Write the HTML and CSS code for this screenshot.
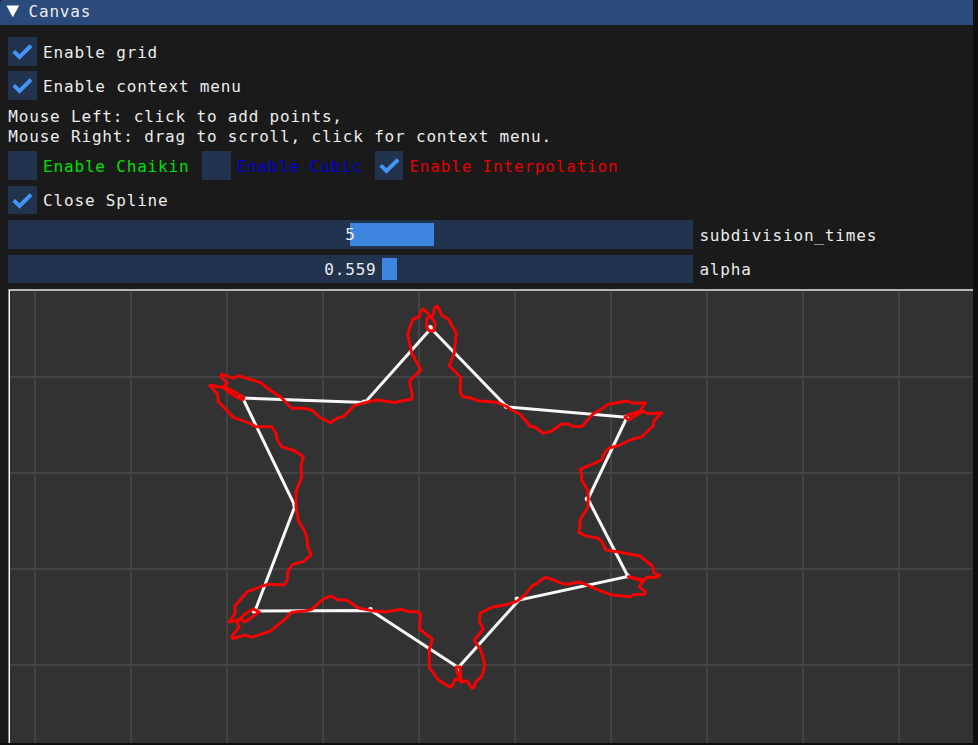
FILE: index.html
```html
<!DOCTYPE html>
<html lang="en">
<head>
<meta charset="utf-8">
<title>Canvas</title>
<link rel="stylesheet" href="styles.css">
</head>
<body>
<main class="window">
  <header class="titlebar">
    <svg class="arrow" width="14" height="13" viewBox="0 0 14 13"><path d="M0.4 0.6H13.2L6.8 12.2Z" fill="#fff"/></svg>
    <span class="title">Canvas</span>
  </header>
  <section class="content">
    <div class="row">
      <span class="box"><svg class="check" viewBox="0 0 29 29"><path d="M5.8 14.6L11.7 20.2L23.4 8.8"/></svg></span>
      <span class="label">Enable grid</span>
    </div>
    <div class="row">
      <span class="box"><svg class="check" viewBox="0 0 29 29"><path d="M5.8 14.6L11.7 20.2L23.4 8.8"/></svg></span>
      <span class="label">Enable context menu</span>
    </div>
    <p class="hint">Mouse Left: click to add points,<br>Mouse Right: drag to scroll, click for context menu.</p>
    <div class="row">
      <span class="box"></span>
      <span class="label green">Enable Chaikin</span>
      <span class="box next"></span>
      <span class="label blue">Enable Cubic</span>
      <span class="box next"><svg class="check" viewBox="0 0 29 29"><path d="M5.8 14.6L11.7 20.2L23.4 8.8"/></svg></span>
      <span class="label red">Enable Interpolation</span>
    </div>
    <div class="row">
      <span class="box"><svg class="check" viewBox="0 0 29 29"><path d="M5.8 14.6L11.7 20.2L23.4 8.8"/></svg></span>
      <span class="label">Close Spline</span>
    </div>
    <div class="row">
      <div class="slider"><i class="grab grab-times"></i><span class="value">5</span></div>
      <span class="label">subdivision_times</span>
    </div>
    <div class="row">
      <div class="slider"><i class="grab grab-alpha"></i><span class="value">0.559</span></div>
      <span class="label">alpha</span>
    </div>
    <svg class="canvas" width="965" height="454" viewBox="8 289 965 454">
      <rect x="8" y="289" width="965" height="454" fill="#323232"/>
      <path class="grid" d="M35 291V743M131 291V743M227 291V743M323 291V743M419 291V743M515 291V743M611 291V743M707 291V743M803 291V743M899 291V743M10 377H973M10 473H973M10 569H973M10 665H973"/>
      <rect x="8" y="289" width="965" height="2" fill="#b4b6b4"/>
      <rect x="8" y="289" width="1" height="454" fill="#858585"/>
      <rect x="9" y="290" width="1" height="453" fill="#fff"/>
      <path class="polygon" d="M431 328.5L507 407L627 417.2L588 499L628 576.5L519 600L458.3 667.5L371 610.5L255 611L295 506L242.7 398L365 402.5Z"/>
      <g class="points">
        <circle cx="430.3" cy="327.3" r="2.4"/><circle cx="506" cy="406.4" r="2.4"/><circle cx="626.6" cy="416.8" r="2.4"/><circle cx="587" cy="499" r="2.4"/><circle cx="627.6" cy="576" r="2.4"/><circle cx="517" cy="599" r="2.4"/><circle cx="458" cy="669" r="2.4"/><circle cx="370.5" cy="609.5" r="2.4"/><circle cx="254" cy="611.3" r="2.4"/><circle cx="294.5" cy="505" r="2.4"/><circle cx="240.7" cy="397" r="2.4"/><circle cx="364" cy="401.8" r="2.4"/>
      </g>
      <path class="curve" d="M242.7 400L236.7 397.3L226.7 390.7L222.7 387.3L227.3 383.3L220.7 376L222 374L233.3 378.3L238.3 375.7L246.7 378.3L260 382.3L270 390L281 397.3L291.7 408.3H305L312.7 410.7L320.7 418L330.7 422.7L337.3 418L343.3 416.7L354 405.7L365 402.7L376.7 400L396.7 402.7L397 401.7L411.7 399.3L412.3 395L409.7 384V380.7L421 370L411.7 353.3L407.7 334L412.7 319.3L419.3 316.7L421 311L423.3 308.7L428.3 314L430 316.5L426.7 319V326.7L429 330.7H434L435.3 323.3L431.5 317L433.5 314L434.5 308L436.7 306L439 309L441.7 315L448.3 319.3L456.3 333.3L454.3 353.3L449.3 366L460.7 377.3L460 391.7L462.7 396.7L470 397.7L477.3 400.7L496.7 402.3L505.7 406L511.7 410L520 414.3L530 426L535 427.3L543.3 433.3L551.7 431L561.7 424L568 424L573 426.5H582L592.7 414.3L600 410L608.3 404.3L627.3 401L633.3 403.3L645.7 402.7L641 409L641.7 410.7L628.3 415L625 417.3L628.3 420L636.7 415L643 411L648 413.7L661.7 412.7L654 420.7L653.3 426L641.7 436.7L630 440L620 445L608.3 448.3L604 454L601.7 460L595 463L580 469.3L581.7 475V480L588 490.7L588.3 499.3L587.7 507.3L580 520V526L578.7 532.3L585 535.7L598.3 538.3L602 542L606 550L616.7 551.7L640 556L652.3 566L654.3 573.3L660 575.3L656 577.5L646.7 577L643.3 581.7L628.3 576.7L643.3 580L639.3 586.7L645.7 592L644 594.5H634L630 596.7L611.7 595L596.7 589.3L580 582L565 584.5L546 577.3L541 580L538 583L531.7 586L525 595L516.7 601.3L506.7 604.7L493.3 606.7L480 613.3L479.3 621.7L483.3 629L474.3 640L480.7 650L485 665L481.7 676.7L476 681.7L474 687L472.3 688.3L466.7 680.7L461 682.3L457 672L456 667H460L461 680L455 679.3L452 686L450 687.3L438.3 680L429.3 667.3V650L432.3 639L419.3 629L420.7 615L418.7 611.7H408.3L401.7 609.3L385 612L371.7 610.7L358.3 608L346.7 600H338.3L330.7 596L323.3 599L311.7 609.3L305 611L291.7 612.3L283.3 620.7L270 631.3L251.7 637.3L245 635L232.7 638.7L231.7 636.7L239.3 626.7L236.7 621.7L245 614L253.3 609L259.3 612L245 622L240.7 619.3L229.3 622L235 613.3V606L247.3 591.7L267.3 584.3L284.3 585L287.3 580L287.7 571.7L292.7 564.3L303.3 561.7L311.3 555L307.3 546V540L305 531.7L298.3 520.7L296 506.7V491.7L301.7 476.7L301 465L303.3 456.7L295 451L281.7 446.7L277.3 440L276 433.3L271.7 426.7H256L249 423L233.3 417.3L218.3 401.7L217.3 394L210 385.3L218.3 386.7L225 387L235 392L244 398Z"/>
    </svg>
  </section>
</main>
</body>
</html>
```

FILE: styles.css
```css
* {
  box-sizing: border-box;
}

body {
  margin: 0;
  width: 978px;
  height: 745px;
  overflow: hidden;
  background: #0e0e0e;
  color: #ececec;
  font: 16px/20px "DejaVu Sans Mono", monospace;
  letter-spacing: 0.82px;
}

.window {
  width: 973px;
  height: 743px;
  background: #191a19;
}

.titlebar {
  display: flex;
  align-items: center;
  height: 25px;
  padding: 0 0 2px 6px;
  gap: 8.5px;
  background: #294a7a;
  border-top-left-radius: 3px;
}

.arrow {
  margin-top: -1px;
}

.content {
  display: flex;
  flex-direction: column;
  padding: 12px 0 0 8.3px;
}

.row {
  display: flex;
  align-items: center;
  height: 28.6px;
  margin-bottom: 5.8px;
}

.label {
  padding-top: 2.6px;
  white-space: pre;
}

.box {
  width: 28.6px;
  height: 28.6px;
  flex: none;
  margin-right: 6.2px;
  background: #22334d;
}

.next {
  margin-left: 12.5px;
}

.check {
  display: block;
  width: 100%;
  height: 100%;
  fill: none;
  stroke: #4296fa;
  stroke-width: 4;
}

.hint {
  height: 39px;
  margin: 1.4px 0 5.2px;
  line-height: 19.5px;
}

.green { color: #00e000; }
.blue { color: #0000d8; }
.red { color: #e80000; }

.slider {
  display: grid;
  align-items: center;
  width: 684.3px;
  height: 28.6px;
  margin-right: 6.8px;
  background: #22334d;
}

.grab,
.value {
  grid-area: 1 / 1;
}

.grab {
  height: 22.6px;
  background: #3d85e0;
}

.grab-times {
  width: 84px;
  margin-left: 342.2px;
}

.grab-alpha {
  width: 15px;
  margin-left: 373.8px;
}

.value {
  z-index: 1;
  padding-top: 2px;
  text-align: center;
}

.canvas {
  display: block;
  margin-left: -0.3px;
}

.grid {
  fill: none;
  stroke: #434343;
  stroke-width: 2;
}

.polygon {
  fill: none;
  stroke: #f8f8f8;
  stroke-width: 3;
}

.points {
  fill: #f8f8f8;
}

.curve {
  fill: none;
  stroke: #fa0000;
  stroke-width: 2.9;
  stroke-linejoin: round;
}
```
